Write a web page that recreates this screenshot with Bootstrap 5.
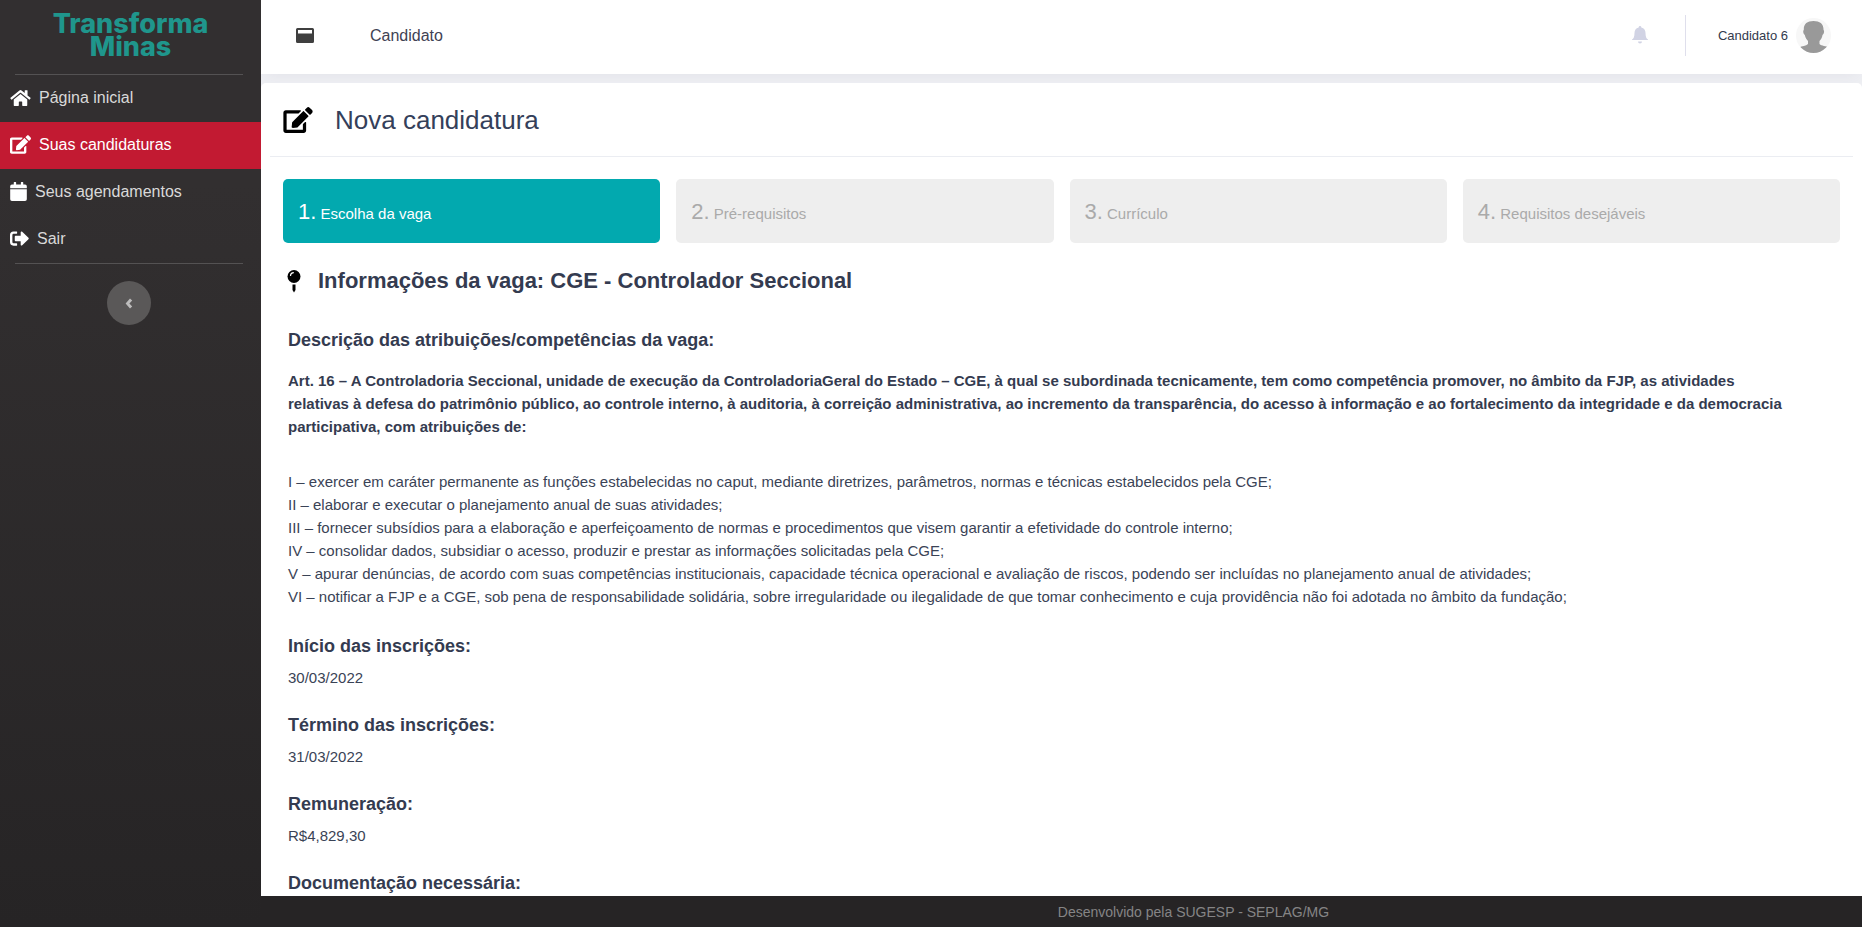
<!DOCTYPE html>
<html lang="pt-BR">
<head>
<meta charset="utf-8">
<meta name="viewport" content="width=device-width, initial-scale=1">
<title>Transforma Minas - Nova candidatura</title>
<link href="https://cdn.jsdelivr.net/npm/bootstrap@5.3.0/dist/css/bootstrap.min.css" rel="stylesheet">
<style>
  body { font-family: "Liberation Sans", Arial, sans-serif; font-size: 15px; line-height: 23px; color: #3a4356; background: #eeeff3; }
  svg { flex: none; fill: currentColor; }
  .side { width: 261px; background: linear-gradient(#322f30 20%, #262425); color: #d9d9d9; font-size: 16px; }
  .brand { height: 74px; padding-top: 12px; font: 800 27px/23px Inter, "Open Sans", sans-serif; color: #1f968c; }
  .side-line { height: 1px; background: #545253; }
  .side-block { margin: 0 18px 0 15px; }
  .side .nav-link { height: 47px; padding: 0 10px 2px; color: inherit; }
  .side .nav-link svg { color: #fff; }
  .side .nav-link.active { background: #c21a32; color: #fff; }
  .fold { width: 44px; height: 44px; margin-top: 17px; background: #5a5858; color: #bdbcbc; }
  .top { height: 74px; padding: 0 31px 4px 35px; background: #fff; box-shadow: 0 5px 15px -5px rgba(82, 63, 105, .08); font-size: 16px; color: #3f4254; }
  .top .menu { color: #3f3f3f; }
  .top .bell { color: #d1d3e4; }
  .top-line { width: 1px; height: 41px; margin: 0 32px 0 37px; background: #dfdfec; }
  .user { font-size: 13px; color: #333a4d; }
  .panel { margin-top: 9px; padding: 0 9px; border-radius: 5px 5px 0 0; background: #fff; }
  .panel-title { height: 74px; padding: 0 13px; gap: 22px; border-bottom: 1px solid #ebedf2; }
  .panel-title h1 { font-size: 26px; line-height: 32px; color: #34405a; }
  .panel-title svg { color: #000; }
  .panel-body { padding: 22px 13px 0; }
  .step { height: 64px; padding: 2px 15px 0; border-radius: 5px; background: #eee; color: #aaa; }
  .step.active { background: #02a9af; color: #fff; }
  .step b { font-size: 22px; font-weight: 400; }
  .job-title { margin-top: 25px; padding-left: 4px; gap: 17px; }
  .job-title svg { color: #000; }
  .job h2 { font-size: 22px; line-height: 26px; }
  .job h3 { font-size: 18px; line-height: 22px; margin-bottom: 9px; }
  .job h2, .job h3, .job strong { font-weight: 700; color: #343b50; }
  .job p { margin-bottom: 25px; }
  .details { padding: 35px 50px 0 5px; }
  .details h3.lead-in { margin-bottom: 18px; }
  .details p.duties { margin-bottom: 27px; }
  .foot { height: 31px; padding: 2px 0 0 264px; background: #262425; color: #858485; font-size: 14px; }
</style>
</head>
<body>
<div class="d-flex vh-100 overflow-hidden">
  <aside class="side flex-shrink-0">
    <div class="brand text-center">Transforma<br>Minas</div>
    <div class="side-block side-line"></div>
    <nav class="nav flex-column flex-nowrap">
      <a class="nav-link d-flex align-items-center gap-2" href="#"><svg width="21" height="18" viewBox="0 0 576 512"><path d="M280 148 96 300v164a16 16 0 0 0 16 16h112a16 16 0 0 0 16-16v-96a16 16 0 0 1 16-16h64a16 16 0 0 1 16 16v96a16 16 0 0 0 16 16h112a16 16 0 0 0 16-16V300L296 148a12 12 0 0 0-16 0zm292 103-84-69V44a12 12 0 0 0-12-12h-56a12 12 0 0 0-12 12v72l-90-74a48 48 0 0 0-61 0L4 251a12 12 0 0 0-2 17l26 31a12 12 0 0 0 17 2l235-194a12 12 0 0 1 15 0l236 194a12 12 0 0 0 17-2l25-31a12 12 0 0 0-1-17z"/></svg>Página inicial</a>
      <a class="nav-link active d-flex align-items-center gap-2" href="#"><svg width="21" height="19" viewBox="0 0 576 512"><path d="m403 84 89 89c3 4 3 10 0 14L276 403l-92 10c-12 1-23-9-21-21l10-92L389 84c4-4 10-4 14 0zm162-23-48-48c-15-15-39-15-54 0l-35 35c-4 4-4 10 0 14l89 89c3 4 10 4 14 0l34-35c15-15 15-40 0-55zM384 346v102H64V128h230c3 0 6-1 9-4l40-40c7-7 2-20-9-20H48c-27 0-48 22-48 48v352c0 27 21 48 48 48h352c26 0 48-21 48-48V306c0-11-13-16-21-9l-40 40c-2 3-3 6-3 9z"/></svg>Suas candidaturas</a>
      <a class="nav-link d-flex align-items-center gap-2" href="#"><svg width="17" height="19" viewBox="0 0 448 512"><path d="M0 192h448v272a48 48 0 0 1-48 48H48a48 48 0 0 1-48-48zm448-24v-56a48 48 0 0 0-48-48h-48V12a12 12 0 0 0-12-12h-40a12 12 0 0 0-12 12v52H160V12a12 12 0 0 0-12-12h-40a12 12 0 0 0-12 12v52H48a48 48 0 0 0-48 48v56z"/></svg>Seus agendamentos</a>
      <a class="nav-link d-flex align-items-center gap-2" href="#"><svg width="19" height="19" viewBox="0 0 512 512"><path d="M497 273 329 441c-15 15-41 4-41-17v-96H152a24 24 0 0 1-24-24v-96a24 24 0 0 1 24-24h136V88c0-21 26-32 41-17l168 168a24 24 0 0 1 0 34zM192 436v-40a12 12 0 0 0-12-12H96a32 32 0 0 1-32-32V160a32 32 0 0 1 32-32h84a12 12 0 0 0 12-12V76a12 12 0 0 0-12-12H96a96 96 0 0 0-96 96v192a96 96 0 0 0 96 96h84a12 12 0 0 0 12-12z"/></svg>Sair</a>
    </nav>
    <div class="side-block">
      <div class="side-line"></div>
      <button type="button" aria-label="Recolher menu" class="fold btn rounded-circle p-0 border-0 d-flex align-items-center justify-content-center mx-auto"><svg width="8" height="11" viewBox="0 0 8 11"><path d="M5 .6 7.200 2.400 4.400 5.500l2.800 3.100L5 10.400.6 5.500z"/></svg></button>
    </div>
  </aside>

  <div class="flex-grow-1 d-flex flex-column overflow-hidden">
    <header class="top flex-shrink-0 d-flex align-items-center">
      <button type="button" aria-label="Menu" class="menu btn p-0 border-0 d-flex"><svg width="18" height="15" viewBox="0 0 18 15"><path fill-rule="evenodd" d="M1.500 0h15A1.500 1.500 0 0 1 18 1.500v12a1.500 1.500 0 0 1-1.500 1.500h-15A1.500 1.500 0 0 1 0 13.500v-12A1.500 1.500 0 0 1 1.500 0zM2 2v3.500h14V2z"/></svg></button>
      <span class="ms-5 ps-2">Candidato</span>
      <svg class="bell ms-auto" width="16" height="18" viewBox="0 0 16 18"><path d="M8 0c.8 0 1.300.6 1.300 1.400C12.300 2 13.500 4.500 13.500 7c0 4 1 5.500 2.500 6.500V14H0v-.5C1.500 12.500 2.500 11 2.500 7c0-2.500 1.200-5 4.200-5.600C6.700.6 7.200 0 8 0zM6 15.500h4a2 2 0 0 1-4 0z"/></svg>
      <div class="top-line"></div>
      <a href="#" class="user d-flex align-items-center gap-2 text-decoration-none">Candidato 6
        <svg width="35" height="35" viewBox="0 0 35 35"><defs><clipPath id="disc"><circle cx="17.500" cy="17.500" r="17.500"/></clipPath></defs><circle cx="17.500" cy="17.500" r="17.500" fill="#f7f7f7"/><path clip-path="url(#disc)" fill="#999" d="M17.500 3C11 3 7.500 6 7.800 12c-1 .4-.7 3.500 1 5 .7 3 1.700 4.500 3.200 6v3c-2 2-6 2-9 3.500V36h30v-6.500C30 28 25.500 28 23.500 26v-3c1.500-1.500 2.500-3 3-6 1.700-1.500 2-4.600 1-5 .3-6-3.500-9-10-9z"/></svg>
      </a>
    </header>

    <main class="panel flex-grow-1 overflow-hidden">
      <div class="panel-title d-flex align-items-center">
        <svg width="30" height="26" viewBox="0 0 576 512"><path d="m403 84 89 89c3 4 3 10 0 14L276 403l-92 10c-12 1-23-9-21-21l10-92L389 84c4-4 10-4 14 0zm162-23-48-48c-15-15-39-15-54 0l-35 35c-4 4-4 10 0 14l89 89c3 4 10 4 14 0l34-35c15-15 15-40 0-55zM384 346v102H64V128h230c3 0 6-1 9-4l40-40c7-7 2-20-9-20H48c-27 0-48 22-48 48v352c0 27 21 48 48 48h352c26 0 48-21 48-48V306c0-11-13-16-21-9l-40 40c-2 3-3 6-3 9z"/></svg>
        <h1 class="m-0 fw-normal">Nova candidatura</h1>
      </div>
      <div class="panel-body">
        <div class="row g-3 row-cols-4">
          <div class="col"><div class="step active d-flex align-items-center"><span><b>1.</b> Escolha da vaga</span></div></div>
          <div class="col"><div class="step d-flex align-items-center"><span><b>2.</b> Pré-requisitos</span></div></div>
          <div class="col"><div class="step d-flex align-items-center"><span><b>3.</b> Currículo</span></div></div>
          <div class="col"><div class="step d-flex align-items-center"><span><b>4.</b> Requisitos desejáveis</span></div></div>
        </div>
        <section class="job">
          <div class="job-title d-flex align-items-center">
            <svg width="14" height="23" viewBox="0 0 14 23"><path d="M5.500 14.500h3V20L7 22.500 5.500 20z"/><circle cx="7" cy="6.500" r="6.500"/><path d="M3.500 6A3.300 3.300 0 0 1 6.800 2.700" fill="none" stroke="#fff" stroke-width="1.200"/></svg>
            <h2 class="m-0">Informações da vaga: CGE - Controlador Seccional</h2>
          </div>
          <div class="details">
            <h3 class="lead-in">Descrição das atribuições/competências da vaga:</h3>
            <p class="mb-3"><strong>Art. 16 – A Controladoria Seccional, unidade de execução da ControladoriaGeral do Estado – CGE, à qual se subordinada tecnicamente, tem como competência promover, no âmbito da FJP, as atividades relativas à defesa do patrimônio público, ao controle interno, à auditoria, à correição administrativa, ao incremento da transparência, do acesso à informação e ao fortalecimento da integridade e da democracia participativa, com atribuições de:</strong></p>
            <p class="duties pt-3">I – exercer em caráter permanente as funções estabelecidas no caput, mediante diretrizes, parâmetros, normas e técnicas estabelecidos pela CGE;<br>
            II – elaborar e executar o planejamento anual de suas atividades;<br>
            III – fornecer subsídios para a elaboração e aperfeiçoamento de normas e procedimentos que visem garantir a efetividade do controle interno;<br>
            IV – consolidar dados, subsidiar o acesso, produzir e prestar as informações solicitadas pela CGE;<br>
            V – apurar denúncias, de acordo com suas competências institucionais, capacidade técnica operacional e avaliação de riscos, podendo ser incluídas no planejamento anual de atividades;<br>
            VI – notificar a FJP e a CGE, sob pena de responsabilidade solidária, sobre irregularidade ou ilegalidade de que tomar conhecimento e cuja providência não foi adotada no âmbito da fundação;</p>
            <h3>Início das inscrições:</h3>
            <p>30/03/2022</p>
            <h3>Término das inscrições:</h3>
            <p>31/03/2022</p>
            <h3>Remuneração:</h3>
            <p>R$4,829,30</p>
            <h3>Documentação necessária:</h3>
          </div>
        </section>
      </div>
    </main>
    <footer class="foot flex-shrink-0 d-flex align-items-center justify-content-center">Desenvolvido pela SUGESP - SEPLAG/MG</footer>
  </div>
</div>
<script src="https://cdn.jsdelivr.net/npm/bootstrap@5.3.0/dist/js/bootstrap.bundle.min.js"></script>
</body>
</html>
